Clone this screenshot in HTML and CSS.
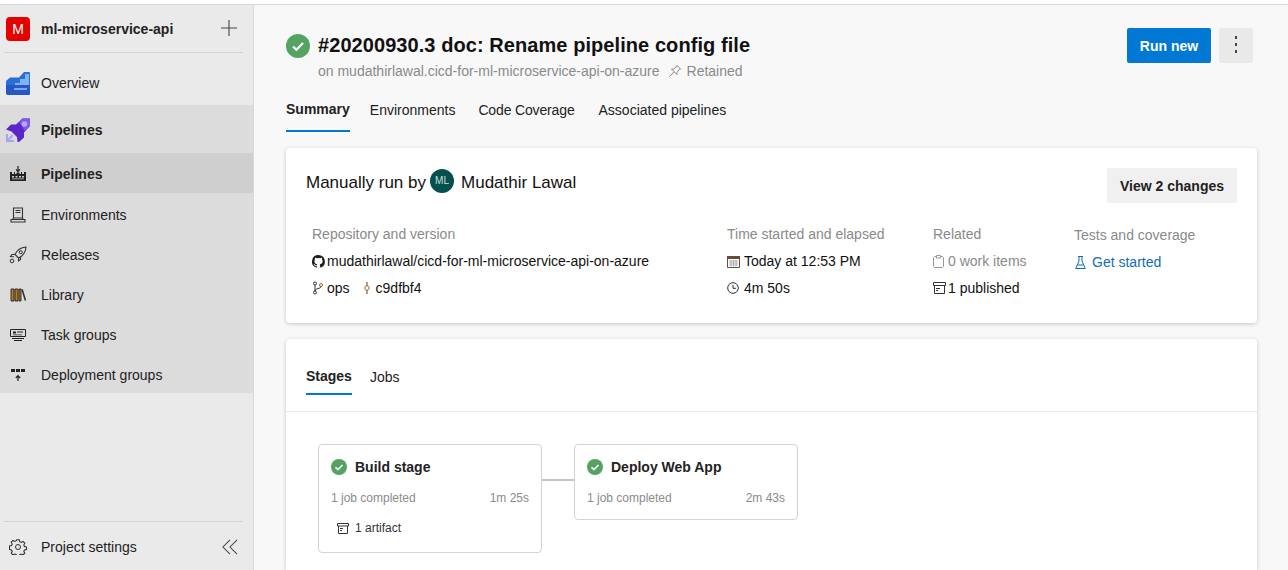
FILE: index.html
```html
<!DOCTYPE html>
<html lang="en">
<head>
    <meta charset="UTF-8">
    <title>Pipelines - Run 20200930.3</title>
    <link rel="stylesheet" href="styles.css">
</head>
<body>
    <div class="topline"></div>
    <div class="app">
        <aside class="sidebar">
            <div class="project">
                <span class="project-badge">M</span>
                <span class="project-name">ml-microservice-api</span>
                <svg class="plus" width="18" height="18" viewBox="0 0 18 18"><path d="M9 1v16M1 9h16" stroke="#444" stroke-width="1.1" fill="none"/></svg>
            </div>
            <a class="nav-row overview">
                <svg class="hub" width="24" height="24" viewBox="0 0 24 24">
                    <path d="M4 6.500 13 6.500 18 1H23a1 1 0 0 1 1 1v21a1 1 0 0 1-1 1H3a3 3 0 0 1-3-3V10z" fill="#2b6fd6"/>
                    <path d="M14 8h5V3h4v12H9v-3h5z" fill="#7fb2ee"/>
                    <path d="M0 14h24v8a2 2 0 0 1-2 2H2a2 2 0 0 1-2-2z" fill="#2557c5"/>
                    <path d="M8 17h13v2H8z" fill="#7fa6ea"/>
                </svg>
                <span>Overview</span>
            </a>
            <div class="group">
                <a class="nav-row group-head">
                    <svg class="hub" width="24" height="24" viewBox="0 0 24 24">
                        <path d="M0 11.500 5 6.500h5L16.500 .5H24v7.500L18 14.500v5L13 24h-1.500l-.5-5L5.500 13.500z" fill="#5a25c9"/>
                        <path d="M13 4 16.500 .5H24v7.500L19 13z" fill="#7d5be6"/>
                        <circle cx="18.500" cy="6" r="2.800" fill="#b7a6f5"/>
                        <path d="M0 16h2v4.500L6 16.500 7.500 18 3.500 22H8v2H0z" fill="#a5a5f5"/>
                    </svg>
                    <span>Pipelines</span>
                </a>
                <a class="nav-row active">
                    <svg class="sub-icon" width="16" height="16" viewBox="0 0 16 16">
                        <path d="M8 0v5M6 3.300 8 5.500 10 3.300" stroke="#222" stroke-width="1.200" fill="none"/>
                        <path d="M0 6h2v2h2V6h1v2h1.500V6.500h3V8H11V6h1v2h2V6h2v9H0z" fill="#222"/>
                        <path d="M2 10h2v1.500H2zM5.500 10h2v1.500h-2zM9 10h2v1.500H9zM12 10h2v1.500h-2zM2 12.500h12v.8H2z" fill="#d0d0d0"/>
                    </svg>
                    <span>Pipelines</span>
                </a>
                <a class="nav-row sub-row">
                    <svg class="sub-icon" width="16" height="16" viewBox="0 0 16 16">
                        <path d="M3.500 1h9v10h-9zM1 15v-2.500h14V15zM5.500 3.500h5M5.500 5.500h5M3.500 11l-1 1.500M12.500 11l1 1.500" stroke="#333" stroke-width="1.100" fill="none"/>
                    </svg>
                    <span>Environments</span>
                </a>
                <a class="nav-row sub-row">
                    <svg class="sub-icon" width="18" height="18" viewBox="0 0 18 18">
                        <path d="M6 8.500C8 4 12 1.500 17 1c-.5 5-3 9-7.500 11zM6 8.500H3L1.500 10.500 5 10.800M9.500 12v3l2-1.500.2-3.200" stroke="#333" stroke-width="1.100" fill="none"/>
                        <circle cx="11.800" cy="6.200" r="1.500" stroke="#333" fill="none"/>
                        <circle cx="3" cy="15" r="1.800" stroke="#333" fill="none"/>
                    </svg>
                    <span>Releases</span>
                </a>
                <a class="nav-row sub-row">
                    <svg class="sub-icon" width="16" height="16" viewBox="0 0 16 16">
                        <path d="M1 2h3v12H1zM5 2h3v12H5zM9 2h2v12H9z" fill="#b87a2a" stroke="#222" stroke-width=".9"/>
                        <path d="M12 2.200 15.500 13.500" stroke="#333" stroke-width="1.600" fill="none"/>
                    </svg>
                    <span>Library</span>
                </a>
                <a class="nav-row sub-row">
                    <svg class="sub-icon" width="16" height="16" viewBox="0 0 16 16">
                        <path d="M.5 2.500h15v7H.5zM2 11.500h12M4 13.500h8" stroke="#222" fill="none"/>
                        <path d="M3 4.500h3v2H3zM7 4.500h6v1H7zM3 7.500h9v.8H3z" fill="#222"/>
                    </svg>
                    <span>Task groups</span>
                </a>
                <a class="nav-row sub-row">
                    <svg class="sub-icon" width="16" height="16" viewBox="0 0 16 16">
                        <path d="M1 2h4v3H1zM6 2h4v3H6zM11 2h4v3h-4z" fill="#222"/>
                        <path d="M8 14V9M5.800 11 8 8.700 10.200 11" stroke="#222" stroke-width="1.200" fill="none"/>
                    </svg>
                    <span>Deployment groups</span>
                </a>
            </div>
            <div class="sidebar-foot">
                <svg class="sub-icon" width="16" height="16" viewBox="0 0 16 16">
                    <path d="M6.700.7h2.600l.4 2 1.500.7 1.800-1 1.800 1.800-1 1.800.7 1.500 2 .4v2.600l-2 .4-.7 1.500 1 1.800-1.800 1.800-1.800-1-1.500.7-.4 2H6.700l-.4-2-1.500-.7-1.800 1-1.800-1.800 1-1.800-.7-1.500-2-.4V6.900l2-.4.700-1.500-1-1.800 1.800-1.800 1.800 1 1.500-.7z" stroke="#333" stroke-width="1.100" fill="none"/>
                    <circle cx="8" cy="8" r="2.500" stroke="#333" fill="none"/>
                </svg>
                <span class="foot-label">Project settings</span>
                <svg class="collapse" width="16" height="16" viewBox="0 0 17 17"><path d="M8.500 1 1 8.500 8.500 16M16 1 8.500 8.500 16 16" stroke="#444" stroke-width="1.100" fill="none"/></svg>
            </div>
        </aside>

        <main class="content">
            <div class="page-head">
                <svg class="status-big" width="24" height="24" viewBox="0 0 24 24"><circle cx="12" cy="12" r="12" fill="#55a362"/><path d="M7 12.500l3.400 3.300L17 9" stroke="#fff" stroke-width="2.200" fill="none"/></svg>
                <div class="head-text">
                    <h1>#20200930.3 doc: Rename pipeline config file</h1>
                    <div class="head-sub">
                        <span>on mudathirlawal.cicd-for-ml-microservice-api-on-azure</span>
                        <svg width="14" height="14" viewBox="0 0 14 14"><path d="M8.500 1 13 5.500M9.500 2 5.500 5 3.500 5 9 10.500 9 8.500 12 4.500M6 8 1.500 12.500" stroke="#888" fill="none"/></svg>
                        <span>Retained</span>
                    </div>
                </div>
                <button class="btn-primary">Run new</button>
                <button class="btn-more">
                    <svg width="2" height="17" viewBox="0 0 2 17"><path d="M0 0h2v3H0zM0 7h2v3H0zM0 14h2v3H0z" fill="#444"/></svg>
                </button>
            </div>

            <div class="tabs page-tabs">
                <a class="tab selected">Summary</a>
                <a class="tab">Environments</a>
                <a class="tab tab-coverage">Code Coverage</a>
                <a class="tab">Associated pipelines</a>
            </div>

            <section class="card summary">
                <div class="summary-top">
                    <span class="run-by">Manually run by</span>
                    <span class="avatar">ML</span>
                    <span class="run-by">Mudathir Lawal</span>
                    <button class="btn-soft">View 2 changes</button>
                </div>
                <div class="summary-cols">
                    <div class="col col-repo">
                        <div class="col-title">Repository and version</div>
                        <div class="col-line line-tight">
                            <svg width="13" height="13" viewBox="0 0 16 16"><path d="M8 0a8 8 0 0 0-2.500 15.600c.4.100.5-.2.500-.4v-1.400c-2.200.5-2.700-1-2.700-1-.4-.9-.9-1.200-.9-1.200-.7-.5.100-.5.100-.5.800.1 1.200.8 1.200.8.700 1.200 1.900.9 2.300.7.100-.5.300-.9.500-1.100-1.800-.2-3.600-.9-3.600-4 0-.9.300-1.600.8-2.100-.1-.2-.4-1 .1-2.100 0 0 .7-.2 2.200.8a7.600 7.600 0 0 1 4 0c1.500-1 2.200-.8 2.200-.8.400 1.100.2 1.900.1 2.100.5.600.8 1.300.8 2.100 0 3.100-1.900 3.700-3.700 3.900.3.300.6.800.6 1.500v2.200c0 .2.100.5.600.4A8 8 0 0 0 8 0z" fill="#1b1f23"/></svg>
                            <span>mudathirlawal/cicd-for-ml-microservice-api-on-azure</span>
                        </div>
                        <div class="col-line">
                            <svg class="branch" width="12" height="14" viewBox="0 0 12 14"><circle cx="3" cy="2.500" r="1.500" stroke="#333" fill="none"/><circle cx="3" cy="11.500" r="1.500" stroke="#333" fill="none"/><circle cx="9" cy="4" r="1.500" stroke="#a56a20" fill="none"/><path d="M3 4v6M9 5.500C9 8 3 7 3 10" stroke="#333" fill="none"/></svg>
                            <span>ops</span>
                            <svg class="commit" width="10" height="14" viewBox="0 0 10 14"><circle cx="5" cy="7" r="2.200" stroke="#a56a20" fill="none"/><path d="M5 1v3.800M5 9.200V13" stroke="#444" fill="none"/></svg>
                            <span>c9dfbf4</span>
                        </div>
                    </div>
                    <div class="col col-time">
                        <div class="col-title">Time started and elapsed</div>
                        <div class="col-line">
                            <svg width="13" height="13" viewBox="0 0 13 13"><path d="M.5 1.500h12v11H.5z" stroke="#6a4a3a" fill="none"/><path d="M0 1h13v3H0z" fill="#6a4a3a"/><path d="M2 6h9M2 8h9M2 10h9M4 5v6.500M6.500 5v6.500M9 5v6.500" stroke="#999" stroke-width=".7"/></svg>
                            <span>Today at 12:53 PM</span>
                        </div>
                        <div class="col-line line-wide">
                            <svg width="12" height="12" viewBox="0 0 12 12"><circle cx="6" cy="6" r="5.300" stroke="#333" fill="none"/><path d="M6 2.800V6.300H9" stroke="#333" fill="none"/></svg>
                            <span>4m 50s</span>
                        </div>
                    </div>
                    <div class="col col-related">
                        <div class="col-title">Related</div>
                        <div class="col-line muted">
                            <svg width="11" height="13" viewBox="0 0 11 13"><path d="M3 1.500H1.500l-1 1v9l1 1h8l1-1v-9l-1-1H8M3.500.5h4v2.500h-4z" stroke="#999" fill="none"/></svg>
                            <span>0 work items</span>
                        </div>
                        <div class="col-line line-tight">
                            <svg width="13" height="12" viewBox="0 0 13 12"><path d="M.5 .5h12v3H.5zM1.500 3.500v8h10v-8" stroke="#333" fill="none"/><path d="M3 6h4v1H3zM3 8h2v1H3z" fill="#333"/></svg>
                            <span>1 published</span>
                        </div>
                    </div>
                    <div class="col col-tests">
                        <div class="col-title">Tests and coverage</div>
                        <div class="col-line link">
                            <svg width="11" height="13" viewBox="0 0 11 13"><path d="M3 .5h5M4 .5v4.500L.7 12.500h9.600L7 5V.5M2.500 9h6" stroke="#0f6cbd" fill="none"/></svg>
                            <span>Get started</span>
                        </div>
                    </div>
                </div>
            </section>

            <section class="card stages">
                <div class="tabs stage-tabs">
                    <a class="tab selected">Stages</a>
                    <a class="tab">Jobs</a>
                </div>
                <div class="stage-flow">
                    <div class="stage">
                        <div class="stage-name">
                            <svg width="16" height="16" viewBox="0 0 16 16"><circle cx="8" cy="8" r="8" fill="#55a362"/><path d="M4.500 8.300l2.400 2.300L11.500 6" stroke="#fff" stroke-width="1.600" fill="none"/></svg>
                            <span>Build stage</span>
                        </div>
                        <div class="stage-meta"><span>1 job completed</span><span>1m 25s</span></div>
                        <div class="stage-artifact">
                            <svg width="12" height="11" viewBox="0 0 12 11"><path d="M.5 .5h11v2.500H.5zM1.500 3v7.500h9V3" stroke="#333" fill="none"/><path d="M3 5h3v1H3zM3 7h2v1H3z" fill="#333"/></svg>
                            <span>1 artifact</span>
                        </div>
                    </div>
                    <div class="connector"></div>
                    <div class="stage">
                        <div class="stage-name">
                            <svg width="16" height="16" viewBox="0 0 16 16"><circle cx="8" cy="8" r="8" fill="#55a362"/><path d="M4.500 8.300l2.400 2.300L11.500 6" stroke="#fff" stroke-width="1.600" fill="none"/></svg>
                            <span>Deploy Web App</span>
                        </div>
                        <div class="stage-meta"><span>1 job completed</span><span>2m 43s</span></div>
                    </div>
                </div>
            </section>
        </main>
    </div>
</body>
</html>
```

FILE: styles.css
```css
html, body {
    margin: 0;
    padding: 0;
    height: 570px;
    overflow: hidden;
}

body {
    font-family: "Liberation Sans", Arial, sans-serif;
    font-size: 14px;
    color: #222;
    background-color: #f8f8f8;
}

.topline {
    height: 4px;
    background-color: #fff;
    border-bottom: 1px solid #d8d8d8;
}

.app {
    display: flex;
    height: 565px;
}

/* sidebar */
.sidebar {
    width: 253px;
    flex-shrink: 0;
    display: flex;
    flex-direction: column;
    background-color: #eaeaea;
    border-right: 1px solid #d8d8d8;
}

.project {
    display: flex;
    align-items: center;
    height: 47px;
    margin: 0 10px 0 4px;
    padding: 0 5px 0 2px;
    border-bottom: 1px solid #d4d4d4;
}

.project-badge {
    width: 24px;
    height: 24px;
    border-radius: 4px;
    background-color: #e60000;
    color: #fff;
    text-align: center;
    line-height: 24px;
}

.project-name {
    flex: 1;
    margin-left: 11px;
    font-weight: bold;
}

.plus {
    margin-bottom: 2px;
}

.nav-row {
    display: flex;
    align-items: center;
    height: 40px;
    padding-left: 6px;
    box-sizing: border-box;
}

.nav-row span {
    margin-left: 11px;
}

.overview {
    margin-top: 9px;
    height: 43px;
    padding-bottom: 1px;
}

.group {
    background-color: #dcdcdc;
    height: 288px;
    overflow: hidden;
}

.group-head {
    height: 48px;
    padding-top: 2px;
    font-weight: bold;
}

.active {
    background-color: #cfcfcf;
    padding-top: 2px;
    font-weight: bold;
}

.sub-row {
    padding-top: 4px;
}

.sub-icon {
    width: 18px;
    flex-shrink: 0;
    margin-left: 3px;
    margin-right: 3px;
}

.nav-row .sub-icon + span {
    margin-left: 11px;
}

.sidebar-foot {
    display: flex;
    align-items: center;
    box-sizing: border-box;
    margin: auto 10px 0 4px;
    height: 49px;
    padding: 1px 0 0 2px;
    border-top: 1px solid #d4d4d4;
}

.foot-label {
    flex: 1;
    margin-left: 11px;
}

.collapse {
    margin-right: 5px;
}

/* main area */
.content {
    flex: 1;
    padding: 0 31px 0 32px;
}

.page-head {
    display: flex;
    align-items: flex-start;
    padding-top: 23px;
}

.status-big {
    margin-top: 6px;
    flex-shrink: 0;
}

.head-text {
    flex: 1;
    margin-left: 8px;
}

h1 {
    margin: 4px 0 0;
    font-size: 20px;
    line-height: 26px;
    letter-spacing: 0.07px;
    color: #111;
}

.head-sub {
    display: flex;
    align-items: center;
    gap: 5px;
    margin-top: 5px;
    color: #8a8a8a;
}

.head-sub svg {
    margin-left: 3px;
}

.btn-primary,
.btn-more,
.btn-soft {
    border: 0;
    border-radius: 2px;
    font-family: "Liberation Sans", Arial, sans-serif;
    font-size: 14px;
    font-weight: bold;
    height: 35px;
    padding: 0;
}

.btn-primary {
    width: 84px;
    background-color: #0078d4;
    color: #fff;
}

.btn-more {
    width: 34px;
    margin-left: 8px;
    margin-right: 4px;
    background-color: #e9e9e9;
}

.btn-soft {
    width: 130px;
    margin-left: auto;
    background-color: #f0f0f0;
    color: #222;
}

.tabs {
    display: flex;
}

.tab {
    padding-bottom: 12px;
    line-height: 16px;
    border-bottom: 2px solid transparent;
}

.tab.selected {
    font-weight: bold;
    margin-top: -1px;
    padding-bottom: 13px;
    border-bottom-color: #0078d4;
}

.page-tabs {
    gap: 24px;
    margin-top: 23px;
}

.page-tabs .tab:nth-child(2) {
    margin-left: -4px;
}

.tab-coverage {
    margin-left: -1px;
    letter-spacing: -0.15px;
}

.card {
    background-color: #fff;
    border-radius: 4px;
    box-shadow: 0 1px 4px rgba(0, 0, 0, 0.2);
}

.summary {
    height: 175px;
    margin-top: 16px;
    padding: 20px 20px 0;
    box-sizing: border-box;
}

.summary-top {
    display: flex;
    align-items: flex-start;
}

.run-by {
    font-size: 17px;
    line-height: 29px;
    color: #111;
}

.avatar {
    width: 24px;
    height: 24px;
    margin: 1px 7px 0 4px;
    border-radius: 50%;
    background-color: #04504f;
    color: #cfdede;
    font-size: 10px;
    line-height: 24px;
    text-align: center;
}

.summary-cols {
    display: flex;
    margin-top: 22px;
    padding-left: 6px;
}

.col-title {
    color: #8a8a8a;
    margin-bottom: 9px;
    line-height: 18px;
}

.col-line {
    display: flex;
    align-items: center;
    gap: 4px;
    height: 18px;
    margin-bottom: 9px;
    color: #111;
}

.line-tight {
    gap: 2px;
}

.line-wide {
    gap: 5px;
}

.branch {
    margin-right: -1px;
}

.commit {
    margin-left: 8px;
}

.muted {
    color: #8a8a8a;
}

.link {
    color: #0f6cbd;
}

.col-repo {
    width: 415px;
}

.col-time {
    width: 206px;
}

.col-related {
    width: 141px;
}

.col-tests {
    padding-top: 1px;
}

.col-tests .link {
    gap: 6px;
    padding-left: 1px;
}

.stages {
    margin-top: 16px;
    height: 231px;
    border-radius: 4px 4px 0 0;
}

.stage-tabs {
    gap: 18px;
    align-items: flex-start;
    padding: 30px 20px 16px;
    border-bottom: 1px solid #eaeaea;
}

.stage-tabs .tab {
    padding-bottom: 8px;
}

.stage-tabs .tab.selected {
    padding-bottom: 9px;
}

.stage-flow {
    display: flex;
    align-items: flex-start;
    padding: 32px 32px 0;
}

.stage {
    width: 224px;
    box-sizing: border-box;
    padding: 13px 12px 0 12px;
    border: 1px solid #d4d4d4;
    border-radius: 4px;
}

.stage-name {
    display: flex;
    align-items: center;
    gap: 8px;
    font-weight: bold;
    line-height: 18px;
    color: #222;
}

.stage-meta {
    display: flex;
    justify-content: space-between;
    margin-top: 14px;
    padding-bottom: 13px;
    font-size: 12px;
    line-height: 16px;
    color: #8a8a8a;
}

.stage-artifact {
    display: flex;
    align-items: center;
    gap: 6px;
    margin-top: -1px;
    padding: 2px 0 16px 6px;
    font-size: 12px;
    line-height: 16px;
    color: #333;
}

.connector {
    width: 32px;
    height: 2px;
    margin-top: 35px;
    background-color: #c4c4c4;
}
```
